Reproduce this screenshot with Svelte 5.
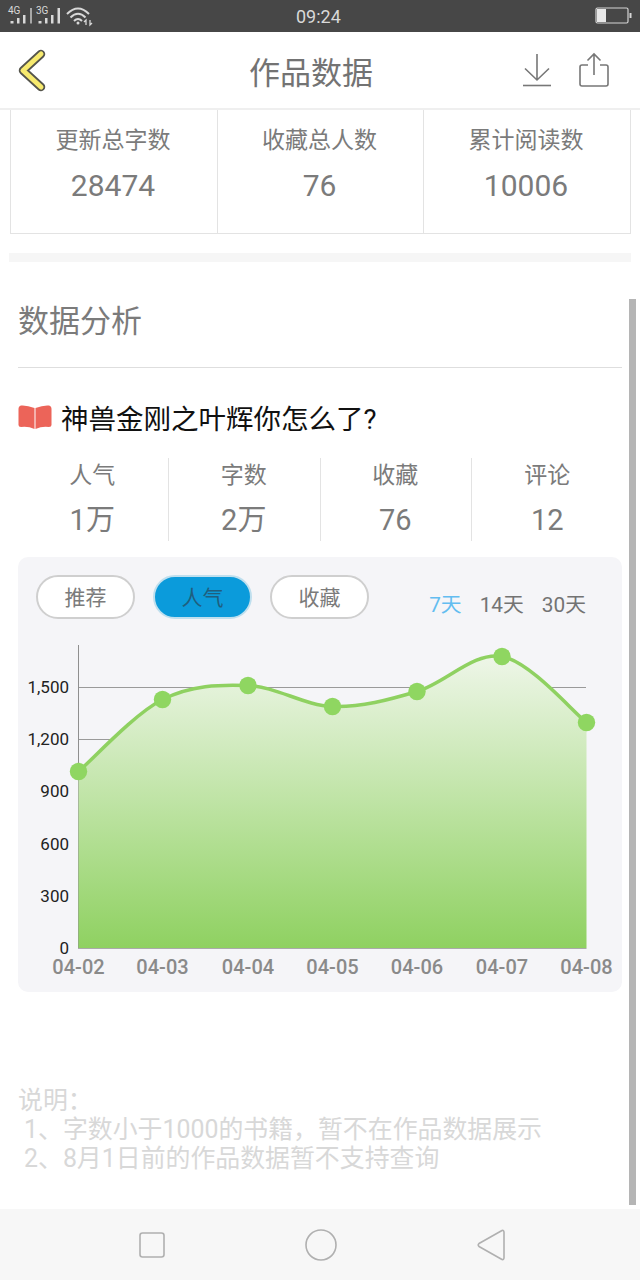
<script>
    const totals = [
        { label: '更新总字数', value: '28474' },
        { label: '收藏总人数', value: '76' },
        { label: '累计阅读数', value: '10006' }
    ];
    const counts = [
        { label: '人气', value: '1万' },
        { label: '字数', value: '2万' },
        { label: '收藏', value: '76' },
        { label: '评论', value: '12' }
    ];
    const tabs = ['推荐', '人气', '收藏'];
    const ranges = ['7天', '14天', '30天'];

    // chart, in page coordinates (the svg viewBox starts at 18,640)
    const baseY = 948;
    const yTicks = [0, 300, 600, 900, 1200, 1500];
    const scaleY = (v) => baseY - (v * 261) / 1500;

    const points = [
        { x: 78.5, y: 771.5, date: '04-02' },
        { x: 162.5, y: 699.5, date: '04-03' },
        { x: 248, y: 685.5, date: '04-04' },
        { x: 332.5, y: 706.5, date: '04-05' },
        { x: 417, y: 691.5, date: '04-06' },
        { x: 502, y: 656.5, date: '04-07' },
        { x: 586.5, y: 722.5, date: '04-08' }
    ];

    function smooth(p) {
        let d = `M${p[0].x} ${p[0].y}`;
        for (let i = 0; i < p.length - 1; i++) {
            const a = p[i - 1] || p[i];
            const b = p[i];
            const c = p[i + 1];
            const e = p[i + 2] || c;
            const c1x = b.x + (c.x - a.x) / 6;
            const c1y = b.y + (c.y - a.y) / 6;
            const c2x = c.x - (e.x - b.x) / 6;
            const c2y = c.y - (e.y - b.y) / 6;
            d += ` C${c1x} ${c1y} ${c2x} ${c2y} ${c.x} ${c.y}`;
        }
        return d;
    }

    const line = smooth(points);
    const area = `${line} L586.5 ${baseY} L78.5 ${baseY} Z`;
</script>

<main class="phone">
    <div class="status">
        <svg class="signal" width="94" height="32" viewBox="0 0 94 32">
            <text x="8" y="14" class="net">4G</text>
            <rect x="10.500" y="21" width="3" height="2.500" />
            <rect x="17" y="18" width="2.500" height="5.500" />
            <rect x="23" y="15" width="2.500" height="8.500" />
            <rect x="30" y="8" width="2" height="15.500" fill="#a8a8a8" />
            <text x="36" y="14" class="net">3G</text>
            <rect x="38.500" y="21" width="3" height="2.500" />
            <rect x="45" y="18" width="2.500" height="5.500" />
            <rect x="51" y="15" width="2.500" height="8.500" />
            <rect x="57.500" y="8" width="2.500" height="15.500" />
            <g fill="none" stroke="#d8d8d8" stroke-width="2">
                <path d="M67 14 Q78 3 89 14" />
                <path d="M70.500 17.500 Q78 10 85.500 17.500" />
                <path d="M74 21 Q78 17 82 21" />
            </g>
            <circle cx="78" cy="23" r="1.500" />
            <path d="M86 25 V20 L84 22 M90 20 V25 L92 23" fill="none" stroke="#d8d8d8" stroke-width="1.300" />
        </svg>
        <span class="clock">09:24</span>
        <svg class="battery" width="38" height="18" viewBox="0 0 38 18">
            <rect x="1" y="1" width="32" height="15" rx="1.500" fill="none" stroke="#d5d5d5" stroke-width="1.200" />
            <rect x="2" y="2" width="9" height="13" fill="#e8e8e8" />
            <rect x="34.500" y="6" width="2" height="5" fill="#d5d5d5" />
        </svg>
    </div>

    <header class="top">
        <svg class="back" width="32" height="48" viewBox="0 0 32 48">
            <path d="M25 8 L7 24.500 L25 41" fill="none" stroke="#55554c" stroke-width="8.500" stroke-linecap="round" stroke-linejoin="round" />
            <path d="M25 8 L7 24.500 L25 41" fill="none" stroke="#f7ea6e" stroke-width="5" stroke-linecap="round" stroke-linejoin="round" />
        </svg>
        <h1>作品数据</h1>
        <div class="actions">
            <svg width="30" height="34" viewBox="0 0 30 34" fill="none" stroke="#777" stroke-width="1.600">
                <path d="M15 1 V27 M3 15.500 L15 27 L27 15.500" />
                <path d="M1 32.500 H29" />
            </svg>
            <svg width="32" height="36" viewBox="0 0 32 36" fill="none" stroke="#777" stroke-width="1.600">
                <path d="M16 2 V23 M9.500 8.500 L16 2 L22.500 8.500" />
                <path d="M10 13 H4 Q2 13 2 15 V32 Q2 34 4 34 H28 Q30 34 30 32 V15 Q30 13 28 13 H22" />
            </svg>
        </div>
    </header>

    <div class="content">
        <section class="totals">
            {#each totals as t}
                <div class="total">
                    <div class="total-label">{t.label}</div>
                    <div class="total-value">{t.value}</div>
                </div>
            {/each}
        </section>

        <div class="band"></div>

        <h2>数据分析</h2>

        <div class="book">
            <svg width="34" height="24" viewBox="0 0 34 24">
                <path d="M16.500 3 Q9 0 3 0.500 Q0.500 1 0.500 4 V20 Q0.500 22 3 22 Q10 21 16.500 24 Z" fill="#ec6459" />
                <path d="M17.500 3 Q25 0 31 0.500 Q33.500 1 33.500 4 V20 Q33.500 22 31 22 Q24 21 17.500 24 Z" fill="#ec6459" />
            </svg>
            <span>神兽金刚之叶辉你怎么了?</span>
        </div>

        <section class="counts">
            {#each counts as c}
                <div class="count">
                    <div class="count-label">{c.label}</div>
                    <div class="count-value">{c.value}</div>
                </div>
            {/each}
        </section>

        <section class="card">
            <div class="card-top">
                <div class="tabs">
                    {#each tabs as tab, i}
                        <span class="tab" class:active={i === 1}>{tab}</span>
                    {/each}
                </div>
                <div class="ranges">
                    {#each ranges as r, i}
                        <span class:current={i === 0}>{r}</span>
                    {/each}
                </div>
            </div>

            <svg class="chart" width="604" height="345" viewBox="18 640 604 345">
                <defs>
                    <linearGradient id="fill" x1="0" y1="0" x2="0" y2="1">
                        <stop offset="0" stop-color="#eef6e8" />
                        <stop offset="1" stop-color="#8fd161" />
                    </linearGradient>
                </defs>
                {#each yTicks as v}
                    {#if v >= 1200}
                        <line x1="78" x2="586" y1={Math.floor(scaleY(v)) + 0.5} y2={Math.floor(scaleY(v)) + 0.5} stroke="#9a9a9a" />
                    {/if}
                    <text x="69" y={scaleY(v) + 6} text-anchor="end" class="y-label">{v.toLocaleString('en-US')}</text>
                {/each}
                <line x1="78.500" x2="78.500" y1="645" y2={baseY} stroke="#8f8f8f" />
                <path d={area} fill="url(#fill)" />
                <line x1="78" x2="586.500" y1={baseY + 0.5} y2={baseY + 0.5} stroke="#aaa" />
                <path d={line} fill="none" stroke="#8fd161" stroke-width="3.500" />
                {#each points as p}
                    <circle cx={p.x} cy={p.y} r="8.700" fill="#8fd661" />
                    <text x={p.x} y="974" text-anchor="middle" class="x-label">{p.date}</text>
                {/each}
            </svg>
        </section>

        <section class="notes">
            <div>说明：</div>
            <div class="note">1、字数小于1000的书籍，暂不在作品数据展示</div>
            <div class="note">2、8月1日前的作品数据暂不支持查询</div>
        </section>

        <div class="scrollbar"></div>
    </div>

    <nav class="softkeys">
        <svg width="28" height="28" viewBox="0 0 28 28" fill="none" stroke="#b0b0b0" stroke-width="1.600">
            <rect x="2" y="2" width="24" height="24" rx="2.500" />
        </svg>
        <svg width="34" height="34" viewBox="0 0 34 34" fill="none" stroke="#b0b0b0" stroke-width="1.600">
            <circle cx="17" cy="17" r="15" />
        </svg>
        <svg width="30" height="34" viewBox="0 0 30 34" fill="none" stroke="#b0b0b0" stroke-width="1.600" stroke-linejoin="round">
            <path d="M26 2.500 Q28 2 28 4.500 V29.500 Q28 32 26 31.500 L3 18.500 Q1.500 17 3 15.500 Z" />
        </svg>
    </nav>
</main>

<style>
    :global(body) {
        margin: 0;
        background: #fff;
    }

    .phone {
        width: 640px;
        height: 1280px;
        display: flex;
        flex-direction: column;
        overflow: hidden;
        font-family: Roboto, "Noto Sans CJK SC", sans-serif;
    }

    .status {
        height: 32px;
        flex: none;
        background: #474747;
        position: relative;
        display: flex;
        align-items: center;
        justify-content: space-between;
        padding-right: 2px;
    }

    .signal {
        fill: #d8d8d8;
    }

    .net {
        font-size: 10px;
        font-family: Roboto, sans-serif;
    }

    .clock {
        position: absolute;
        left: 296px;
        top: 6px;
        font-size: 18px;
        line-height: 22px;
        color: #d9d9d9;
    }

    .battery {
        margin-right: 5px;
    }

    .top {
        height: 78px;
        flex: none;
        display: flex;
        align-items: center;
        box-sizing: border-box;
        border-bottom: 2px solid #efefef;
        padding: 0 30px 0 16px;
        position: relative;
    }

    .top h1 {
        margin: 0;
        position: absolute;
        left: 0;
        right: 18px;
        text-align: center;
        font-size: 31px;
        font-weight: 400;
        color: #737373;
    }

    .actions {
        margin-left: auto;
        display: flex;
        align-items: center;
        gap: 26px;
    }

    .content {
        flex: 1;
        position: relative;
        display: flex;
        flex-direction: column;
    }

    .totals {
        display: grid;
        grid-template-columns: 206px 206px 1fr;
        height: 124px;
        margin: 0 9px 0 10px;
        box-sizing: border-box;
        border: 1px solid #e3e3e3;
        border-top: 0;
        flex: none;
    }

    .total {
        text-align: center;
        border-left: 1px solid #e3e3e3;
        padding: 15px 2px 0 0;
    }

    .total:first-child {
        border-left: 0;
    }

    .total-label {
        font-size: 23px;
        line-height: 32px;
        color: #7b7b7b;
    }

    .total-value {
        font-size: 30px;
        line-height: 44px;
        margin-top: 7px;
        color: #7b7b7b;
    }

    .band {
        height: 9px;
        margin: 19px 9px 0;
        background: #f6f6f6;
        flex: none;
    }

    h2 {
        margin: 0 18px;
        height: 106px;
        box-sizing: border-box;
        padding-top: 38px;
        border-bottom: 1px solid #dedede;
        font-size: 31px;
        line-height: 44px;
        font-weight: 400;
        color: #7b7b7b;
        flex: none;
    }

    .book {
        margin: 28px 18px 0;
        height: 42px;
        display: flex;
        align-items: center;
        gap: 9px;
        font-size: 27.500px;
        color: #111;
        flex: none;
    }

    .counts {
        display: grid;
        grid-template-columns: repeat(4, 151.500px);
        margin: 20px 0 0 17.500px;
        height: 82px;
        flex: none;
    }

    .count {
        text-align: center;
        border-right: 1px solid #e3e3e3;
        padding-right: 1px;
    }

    .count:last-child {
        border-right: 0;
    }

    .count-label {
        padding-top: 2px;
        font-size: 23px;
        line-height: 32px;
        color: #7b7b7b;
    }

    .count-value {
        font-size: 29px;
        line-height: 42px;
        margin-top: 7px;
        color: #7b7b7b;
    }

    .card {
        margin: 17px 18px 0;
        width: 604px;
        height: 435px;
        background: #f5f5f8;
        border-radius: 10px;
        flex: none;
    }

    .card-top {
        height: 83px;
        display: flex;
        align-items: flex-start;
        justify-content: space-between;
        box-sizing: border-box;
        padding: 18px 36px 0 18px;
    }

    .tabs {
        display: flex;
        gap: 18px;
    }

    .tab {
        width: 99px;
        height: 44px;
        box-sizing: border-box;
        border: 2px solid #cfcfcf;
        border-radius: 22px;
        background: #fff;
        display: flex;
        align-items: center;
        justify-content: center;
        padding-bottom: 2px;
        font-size: 21px;
        color: #7b7b7b;
    }

    .tab.active {
        background: #0b9bdb;
        border-color: #bfdfee;
        color: #1f5f7f;
    }

    .ranges {
        display: flex;
        gap: 18px;
        padding-top: 16px;
        font-size: 20.800px;
        line-height: 28px;
        color: #737373;
    }

    .ranges .current {
        color: #63bdf0;
    }

    .chart {
        display: block;
    }

    .y-label {
        font-size: 17px;
        fill: #222;
    }

    .x-label {
        font-size: 20px;
        font-weight: 500;
        fill: #8a8a8a;
    }

    .notes {
        margin: 94px 18px 0;
        font-size: 24.900px;
        line-height: 29px;
        color: #d8d8d8;
        flex: none;
    }

    .note {
        padding-left: 6px;
    }

    .scrollbar {
        position: absolute;
        left: 629px;
        top: 189px;
        width: 7px;
        height: 906px;
        background: #b5b5b5;
    }

    .softkeys {
        height: 71px;
        flex: none;
        background: #f7f7f7;
        display: flex;
        align-items: center;
        justify-content: center;
        gap: 138px;
        padding-left: 3px;
    }
</style>
